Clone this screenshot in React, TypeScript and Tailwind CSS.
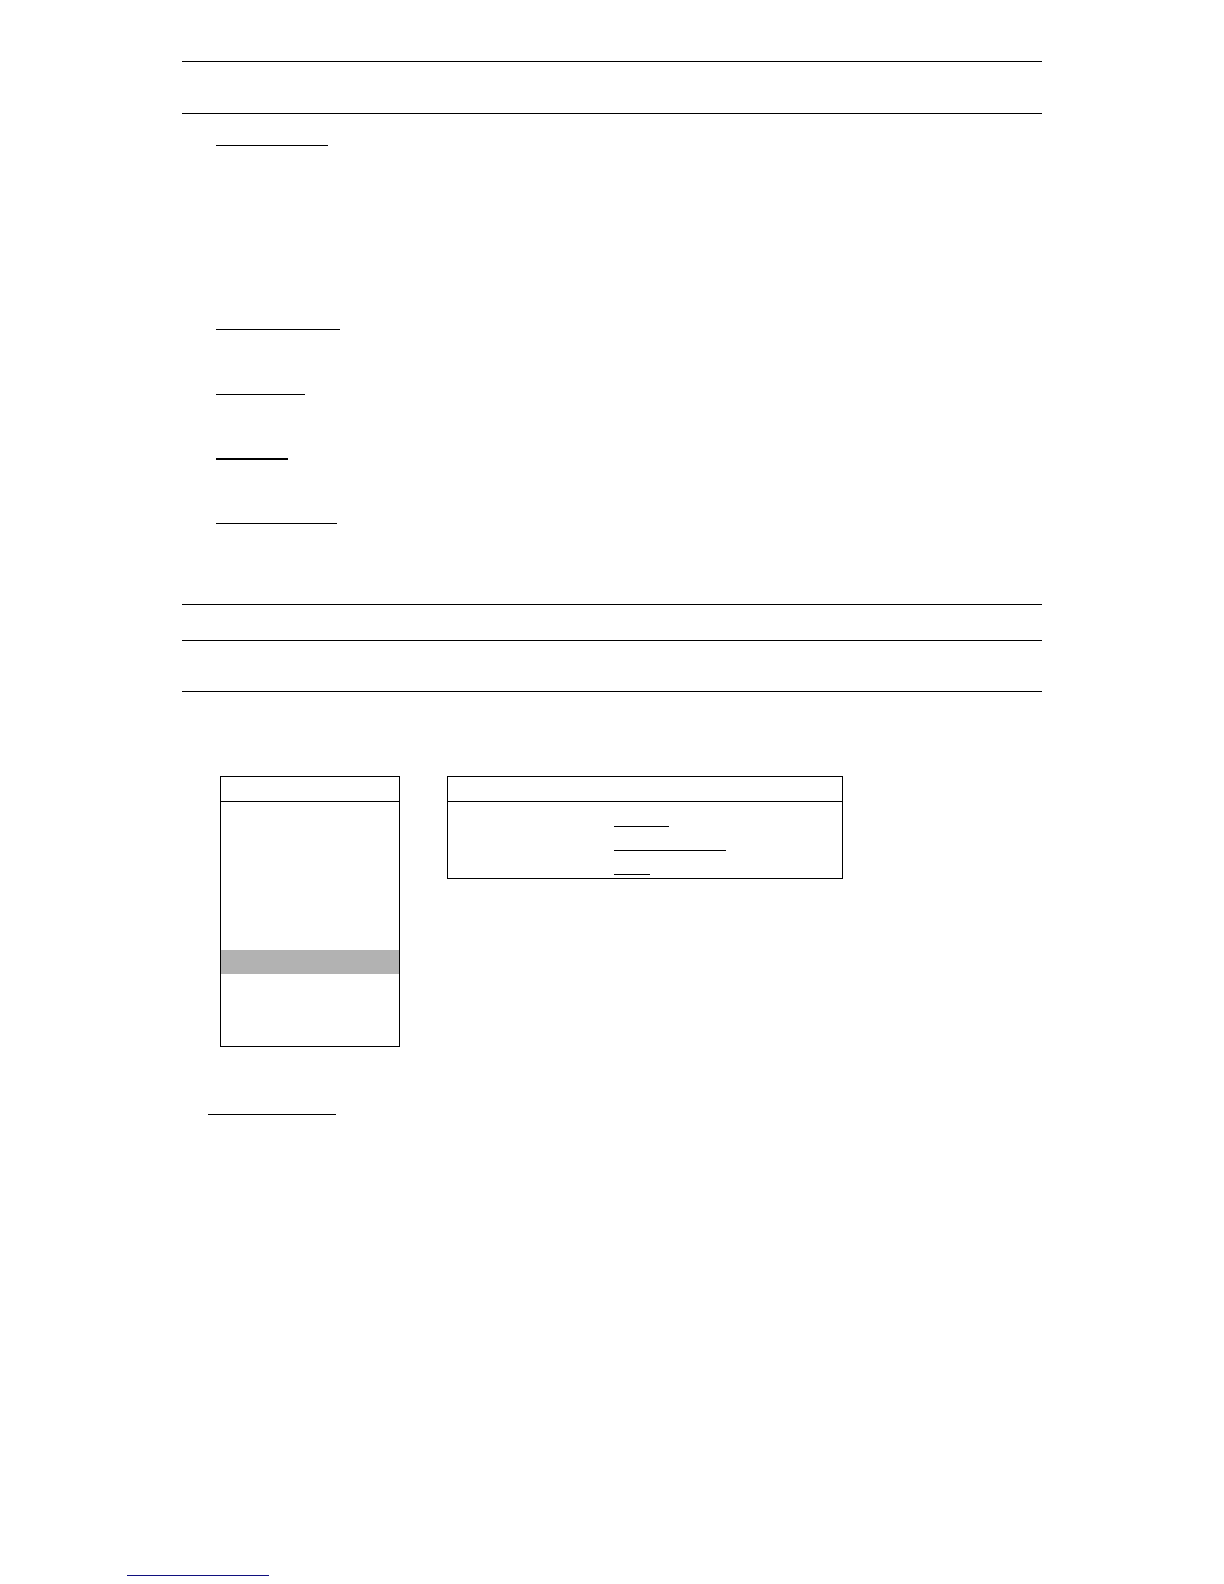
const fields = ["w-[112px]", "w-[124px]", "w-[89px]", "w-[72px]", "w-[121px]"];
const values = ["w-[55px]", "w-[112px]", "w-[36px]"];
const menuRows = Array.from({ length: 10 }, (_, index) => index);
const activeRow = 6;

function Rule() {
  return <hr className="h-px border-0 bg-black" />;
}

function MenuPanel() {
  return (
    <section className="w-[180px] border border-black">
      <div className="h-6" />
      <Rule />
      <ul className="pt-1">
        {menuRows.map((row) => (
          <li
            key={row}
            className={row === activeRow ? "h-6 bg-[#b2b2b2]" : "h-6"}
          />
        ))}
      </ul>
    </section>
  );
}

function DetailPanel() {
  return (
    <section className="w-[396px] border border-black">
      <div className="h-6" />
      <Rule />
      <div className="pt-px pb-[3px] pl-[166px]">
        {values.map((width, index) => (
          <div key={index} className={`h-6 border-b border-black ${width}`} />
        ))}
      </div>
    </section>
  );
}

export default function App() {
  return (
    <div className="min-h-screen bg-white pb-2">
      <main className="px-[182px] pt-[61px]">
        <header className="flex flex-col gap-[51px]">
          <Rule />
          <Rule />
        </header>

        {/* Field underlines, the fourth one is heavier */}
        <section className="pt-[31px] pl-[34px]">
          <div className={`h-px bg-black ${fields[0]}`} />
          <div className="flex flex-col gap-16 pt-[183px]">
            {fields.slice(1).map((width, index) => (
              <div
                key={index}
                className={`bg-black ${index === 2 ? "-my-px h-0.5" : "h-px"} ${width}`}
              />
            ))}
          </div>
        </section>

        <div className="pt-20">
          <Rule />
          <div className="h-[35px]" />
          <Rule />
          <div className="h-[50px]" />
          <Rule />
        </div>

        <div className="flex flex-wrap items-start gap-[47px] pt-[84px] pl-[38px]">
          <MenuPanel />
          <DetailPanel />
        </div>

        <div className="pt-[67px] pl-[26px]">
          <div className="h-px w-[128px] bg-black" />
        </div>
      </main>

      <footer className="pt-[460px] pl-[127px]">
        <div className="h-px w-[142px] bg-[#10107f]" />
      </footer>
    </div>
  );
}
